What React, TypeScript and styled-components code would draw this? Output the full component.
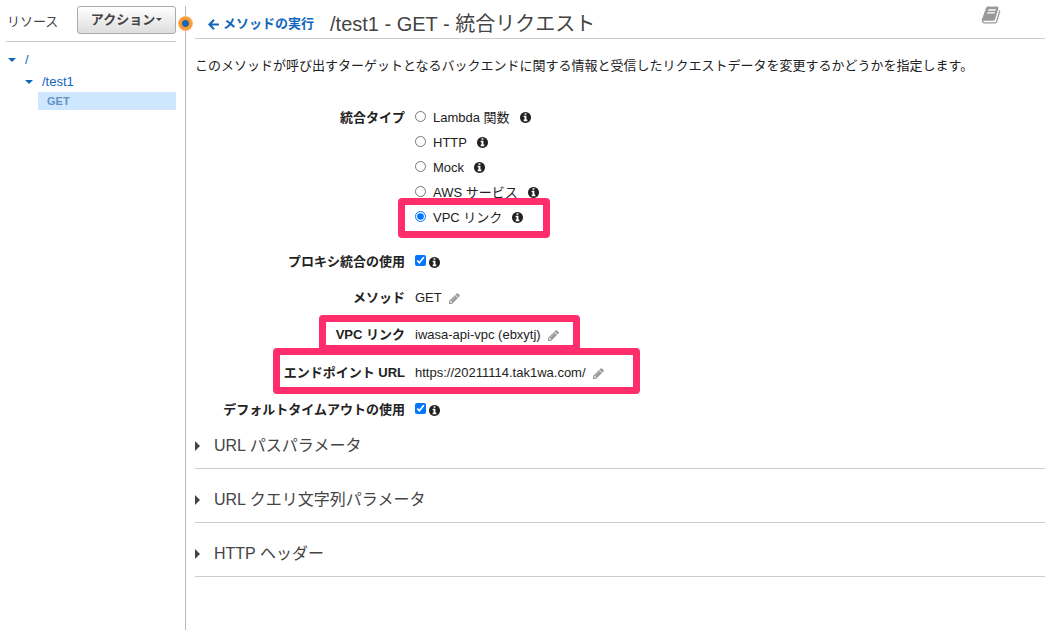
import React, { useState } from "react";
import styled, { createGlobalStyle } from "styled-components";

const GlobalStyle = createGlobalStyle`
  *, *::before, *::after { box-sizing: border-box; }
  body {
    margin: 0;
    background: #fff;
    color: #222;
    font-family: "Liberation Sans", "Noto Sans CJK JP", sans-serif;
    font-size: 13px;
    line-height: 18px;
  }
  button, input { font: inherit; }
`;

const Page = styled.div`
  display: flex;
  min-height: 100vh;
  padding-top: 6px;
`;

const Sidebar = styled.aside`
  flex: 0 0 185px;
  padding: 0 9px 0 6px;
`;

const SidebarHeader = styled.div`
  display: flex;
  align-items: center;
  justify-content: space-between;
  height: 36px;
  padding-bottom: 7px;
  border-bottom: 1px solid #ccc;
  color: #444;
`;

const SidebarTitle = styled.h2`
  margin: 4px 0 0 1px;
  font-size: 13px;
  font-weight: 400;
`;

const ActionButton = styled.button`
  display: flex;
  align-items: center;
  justify-content: center;
  gap: 1px;
  width: 99px;
  height: 28px;
  padding: 0 0 1px;
  border: 1px solid #aaa;
  border-radius: 3px;
  background: linear-gradient(#fff, #ddd);
  color: #444;
  font-weight: 700;
`;

const Caret = styled.span<{ $dir: "down" | "right"; $size: number }>`
  flex: none;
  width: 0;
  height: 0;
  border: ${(p) => p.$size}px solid transparent;
  ${(p) =>
    p.$dir === "down"
      ? `border-top-color: currentColor; border-bottom-width: 0;`
      : `border-left-color: currentColor; border-right-width: 0;`}
`;

const Tree = styled.ul`
  margin: 0;
  padding: 6px 0 0;
  list-style: none;
`;

const TreeItem = styled.li<{ $level: number }>`
  padding-left: ${(p) => p.$level * 17 + 2}px;
`;

const TreeLink = styled.a`
  display: flex;
  align-items: center;
  gap: 9px;
  height: 22px;
  padding-top: 1px;
  color: #1166bb;
  text-decoration: none;
`;

const MethodItem = styled.li`
  padding-left: 32px;
`;

const MethodLink = styled.a`
  display: block;
  padding-left: 9px;
  background: #cfe6ff;
  color: #6393c3;
  font-size: 11px;
  font-weight: 700;
  text-decoration: none;
`;

const Splitter = styled.div`
  position: relative;
  flex: 0 0 1px;
  background: #bbb;
`;

const SplitterHandle = styled.button`
  position: absolute;
  top: 10px;
  left: -7px;
  width: 15px;
  height: 15px;
  padding: 0;
  border: 0;
  border-radius: 50%;
  background: radial-gradient(circle, #1b66ae 0 3px, #f79a35 4px 6px, #fcb96f 7px);
`;

const Main = styled.main`
  flex: 1;
  min-width: 0;
  padding-left: 9px;
`;

const Header = styled.header`
  display: flex;
  align-items: center;
  height: 33px;
  padding: 4px 44px 0 13px;
  border-bottom: 1px solid #ccc;
`;

const BackLink = styled.a`
  display: flex;
  align-items: center;
  gap: 4px;
  color: #1166bb;
  font-weight: 700;
  text-decoration: none;
`;

const Title = styled.h1`
  flex: 1;
  margin: 0 0 0 16px;
  color: #444;
  font-size: 20px;
  font-weight: 400;
  line-height: 24px;
`;

const DocsButton = styled.button`
  display: flex;
  align-self: flex-start;
  margin-top: -5px;
  padding: 0;
  border: 0;
  background: none;
  color: #999;
`;

const Description = styled.p`
  margin: 18px 0 30px;
`;

const Form = styled.form`
  display: flex;
  flex-direction: column;
`;

const labelColumn = `
  flex: 0 0 210px;
  font-weight: 700;
  text-align: right;
`;

const TypeGroup = styled.div`
  display: flex;
  gap: 10px;
  margin-bottom: 14px;
`;

const GroupLabel = styled.span`
  ${labelColumn}
  line-height: 26px;
`;

const Row = styled.div<{ $tall?: boolean }>`
  position: relative;
  display: flex;
  align-items: center;
  gap: 10px;
  min-height: ${(p) => (p.$tall ? 38 : 36)}px;
`;

const RowLabel = styled.label`
  ${labelColumn}
`;

const RowTerm = styled.span`
  ${labelColumn}
`;

const Value = styled.span<{ $gap: number }>`
  display: flex;
  align-items: center;
  gap: ${(p) => p.$gap}px;
`;

const Options = styled.div`
  display: flex;
  flex-direction: column;
`;

const Option = styled.div`
  position: relative;
  display: flex;
  align-items: center;
  gap: 10px;
  height: 25px;
`;

const OptionLabel = styled.label`
  display: flex;
  align-items: center;
  gap: 7px;
`;

const Choice = styled.input`
  flex: none;
  width: 11px;
  height: 11px;
  margin: 0 0 3px;
`;

const IconButton = styled.button<{ $muted?: boolean }>`
  display: flex;
  padding: 0;
  border: 0;
  background: none;
  color: ${(p) => (p.$muted ? "#999" : "#222")};
`;

const Highlight = styled.span<{ $left: number; $top: number; $width: number; $height: number }>`
  position: absolute;
  z-index: 1;
  left: ${(p) => p.$left}px;
  top: ${(p) => p.$top}px;
  width: ${(p) => p.$width}px;
  height: ${(p) => p.$height}px;
  border: 7px solid #ff2d6b;
  border-radius: 4px;
  pointer-events: none;
`;

const Sections = styled.div`
  display: flex;
  flex-direction: column;
  gap: 21px;
  margin-top: 8px;
`;

const Section = styled.section`
  padding-bottom: 12px;
  border-bottom: 1px solid #ccc;
`;

const SectionToggle = styled.button`
  display: flex;
  align-items: center;
  gap: 14px;
  padding: 0;
  border: 0;
  background: none;
  color: #444;
  font-size: 16px;
  line-height: 20px;
`;

const INFO =
  "M1152 1376v-160q0-14-9-23t-23-9h-96v-512q0-14-9-23t-23-9h-320q-14 0-23 9t-9 23v160q0 14 9 23t23 9h96v320h-96q-14 0-23 9t-9 23v160q0 14 9 23t23 9h448q14 0 23-9t9-23zm-128-896v-160q0-14-9-23t-23-9h-192q-14 0-23 9t-9 23v160q0 14 9 23t23 9h192q14 0 23-9t9-23zm640 416q0 209-103 385.5t-279.5 279.5-385.5 103-385.5-103-279.5-279.5-103-385.5 103-385.5 279.5-279.5 385.5-103 385.5 103 279.5 279.5 103 385.5z";
const PENCIL =
  "M491 1536l91-91-235-235-91 91v107h128v128h107zm523-928q0-22-22-22-10 0-17 7l-542 542q-7 7-7 17 0 22 22 22 10 0 17-7l542-542q7-7 7-17zm-54-192l416 416-832 832h-416v-416zm683 96q0 53-37 90l-166 166-416-416 166-165q36-38 90-38 53 0 91 38l235 234q37 39 37 91z";
const BOOK =
  "M1703 478q40 57 18 129l-275 906q-19 64-76.5 107.5t-122.5 43.5h-923q-77 0-148.5-53.5t-99.5-131.5q-24-67-2-127 0-4 3-27t4-37q1-8-3-21.5t-3-19.5q2-11 8-21t16.5-23.5 16.5-23.5q23-38 45-91.5t30-91.5q3-10 .5-30t-.5-28q3-11 17-28t17-23q21-36 42-92t25-90q1-9-2.5-32t.5-28q4-13 22-30.5t22-22.5q19-26 42.5-84.5t27.5-96.5q1-8-3-25.5t-2-26.5q2-8 9-18t18-23 17-21q8-12 16.5-30.5t15-35 16-36 19.5-32 26.5-23.5 36-11.5 47.5 5.5l-1 3q38-9 51-9h761q74 0 114 56t18 130l-274 906q-36 119-71.5 153.5t-128.5 34.5h-869q-27 0-38 15-11 16-1 43 24 70 144 70h923q29 0 56-15.5t35-41.5l300-987q7-22 5-57 38 15 59 43zm-1064 2q-4 13 2 22.5t20 9.5h608q13 0 25.5-9.5t16.5-22.5l21-64q4-13-2-22.5t-20-9.5h-608q-13 0-25.5 9.5t-16.5 22.5zm-83 256q-4 13 2 22.5t20 9.5h608q13 0 25.5-9.5t16.5-22.5l21-64q4-13-2-22.5t-20-9.5h-608q-13 0-25.5 9.5t-16.5 22.5z";

function Glyph({ d, size, box = "128 128 1536 1536" }: { d: string; size: number; box?: string }) {
  return (
    <svg width={size} height={size} viewBox={box} fill="currentColor" aria-hidden="true">
      <path d={d} />
    </svg>
  );
}

function BackArrow() {
  return (
    <svg width="11" height="11" viewBox="0 0 11 11" fill="none" stroke="currentColor" strokeWidth="2" aria-hidden="true">
      <path d="M11 5.5H2M6 .8L1.4 5.5L6 10.2" />
    </svg>
  );
}

function Info({ topic }: { topic: string }) {
  return (
    <IconButton type="button" aria-label={topic}>
      <Glyph d={INFO} size={11} />
    </IconButton>
  );
}

function Edit({ topic }: { topic: string }) {
  return (
    <IconButton type="button" $muted aria-label={topic}>
      <Glyph d={PENCIL} size={11} />
    </IconButton>
  );
}

const TYPES = [
  { id: "lambda", text: "Lambda 関数" },
  { id: "http", text: "HTTP" },
  { id: "mock", text: "Mock" },
  { id: "aws", text: "AWS サービス" },
  { id: "vpc", text: "VPC リンク" },
];

const SECTIONS = ["URL パスパラメータ", "URL クエリ文字列パラメータ", "HTTP ヘッダー"];

export default function App() {
  const [type, setType] = useState("vpc");
  const [proxy, setProxy] = useState(true);
  const [timeout, setDefaultTimeout] = useState(true);

  return (
    <>
      <GlobalStyle />
      <Page>
        <Sidebar>
          <SidebarHeader>
            <SidebarTitle>リソース</SidebarTitle>
            <ActionButton type="button">
              アクション
              <Caret $dir="down" $size={3} />
            </ActionButton>
          </SidebarHeader>
          <Tree>
            <TreeItem $level={0}>
              <TreeLink href="#root">
                <Caret $dir="down" $size={4} />/
              </TreeLink>
            </TreeItem>
            <TreeItem $level={1}>
              <TreeLink href="#test1">
                <Caret $dir="down" $size={4} />
                /test1
              </TreeLink>
            </TreeItem>
            <MethodItem>
              <MethodLink href="#get">GET</MethodLink>
            </MethodItem>
          </Tree>
        </Sidebar>
        <Splitter>
          <SplitterHandle type="button" aria-label="サイドバー" />
        </Splitter>
        <Main>
          <Header>
            <BackLink href="#method">
              <BackArrow />
              メソッドの実行
            </BackLink>
            <Title>/test1 - GET - 統合リクエスト</Title>
            <DocsButton type="button" aria-label="ドキュメント">
              <Glyph d={BOOK} size={20} box="0 0 1792 1792" />
            </DocsButton>
          </Header>
          <Description>
            このメソッドが呼び出すターゲットとなるバックエンドに関する情報と受信したリクエストデータを変更するかどうかを指定します。
          </Description>
          <Form>
            <TypeGroup role="radiogroup" aria-labelledby="type-label">
              <GroupLabel id="type-label">統合タイプ</GroupLabel>
              <Options>
                {TYPES.map((t) => (
                  <Option key={t.id}>
                    <OptionLabel>
                      <Choice
                        type="radio"
                        name="type"
                        checked={type === t.id}
                        onChange={() => setType(t.id)}
                      />
                      {t.text}
                    </OptionLabel>
                    <Info topic={t.text} />
                    {t.id === "vpc" && <Highlight $left={-17} $top={-7} $width={152} $height={40} />}
                  </Option>
                ))}
              </Options>
            </TypeGroup>
            <Row>
              <RowLabel htmlFor="proxy">プロキシ統合の使用</RowLabel>
              <Value $gap={3}>
                <Choice
                  id="proxy"
                  type="checkbox"
                  checked={proxy}
                  onChange={(e) => setProxy(e.target.checked)}
                />
                <Info topic="プロキシ統合の使用" />
              </Value>
            </Row>
            <Row>
              <RowTerm>メソッド</RowTerm>
              <Value $gap={7}>
                GET
                <Edit topic="メソッド" />
              </Value>
            </Row>
            <Row $tall>
              <RowTerm>VPC リンク</RowTerm>
              <Value $gap={7}>
                iwasa-api-vpc (ebxytj)
                <Edit topic="VPC リンク" />
              </Value>
              <Highlight $left={124} $top={-1} $width={261} $height={37} />
            </Row>
            <Row $tall>
              <RowTerm>エンドポイント URL</RowTerm>
              <Value $gap={7}>
                https://20211114.tak1wa.com/
                <Edit topic="エンドポイント URL" />
              </Value>
              <Highlight $left={78} $top={-6} $width={367} $height={46} />
            </Row>
            <Row>
              <RowLabel htmlFor="timeout">デフォルトタイムアウトの使用</RowLabel>
              <Value $gap={3}>
                <Choice
                  id="timeout"
                  type="checkbox"
                  checked={timeout}
                  onChange={(e) => setDefaultTimeout(e.target.checked)}
                />
                <Info topic="デフォルトタイムアウトの使用" />
              </Value>
            </Row>
          </Form>
          <Sections>
            {SECTIONS.map((text) => (
              <Section key={text}>
                <SectionToggle type="button">
                  <Caret $dir="right" $size={5} />
                  {text}
                </SectionToggle>
              </Section>
            ))}
          </Sections>
        </Main>
      </Page>
    </>
  );
}
